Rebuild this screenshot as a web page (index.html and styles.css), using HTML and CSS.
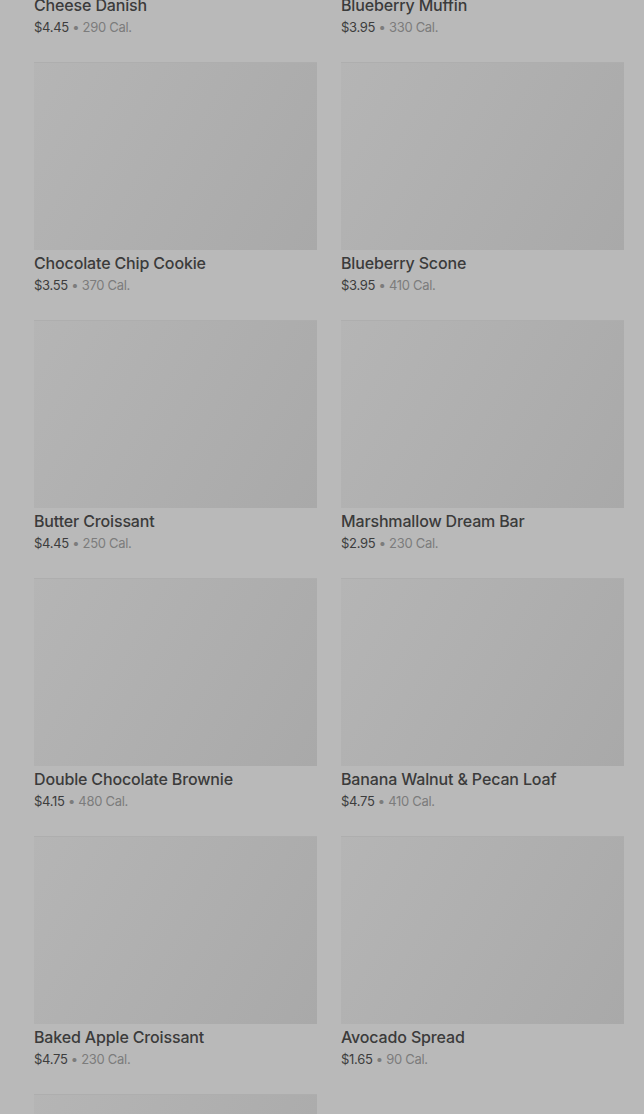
FILE: index.html
```html
<!DOCTYPE html>
<html lang="en">
<head>
  <meta charset="UTF-8" />
  <title>Bakery</title>
  <link rel="stylesheet" href="styles.css">
</head>
<body>

  <!-- Lista de itens (rolada) -->
  <div class="menu">
    <div class="grid">
      <div class="item">
        <div class="foto"></div>
        <h3>Cheese Danish</h3>
        <p class="info"><span class="preco">$4.45</span> • 290 Cal.</p>
      </div>
      <div class="item">
        <div class="foto"></div>
        <h3>Blueberry Muffin</h3>
        <p class="info"><span class="preco">$3.95</span> • 330 Cal.</p>
      </div>
      <div class="item">
        <div class="foto"></div>
        <h3>Chocolate Chip Cookie</h3>
        <p class="info"><span class="preco">$3.55</span> • 370 Cal.</p>
      </div>
      <div class="item">
        <div class="foto"></div>
        <h3>Blueberry Scone</h3>
        <p class="info"><span class="preco">$3.95</span> • 410 Cal.</p>
      </div>
      <div class="item">
        <div class="foto"></div>
        <h3>Butter Croissant</h3>
        <p class="info"><span class="preco">$4.45</span> • 250 Cal.</p>
      </div>
      <div class="item">
        <div class="foto"></div>
        <h3>Marshmallow Dream Bar</h3>
        <p class="info"><span class="preco">$2.95</span> • 230 Cal.</p>
      </div>
      <div class="item">
        <div class="foto"></div>
        <h3>Double Chocolate Brownie</h3>
        <p class="info"><span class="preco">$4.15</span> • 480 Cal.</p>
      </div>
      <div class="item">
        <div class="foto"></div>
        <h3>Banana Walnut &amp; Pecan Loaf</h3>
        <p class="info"><span class="preco">$4.75</span> • 410 Cal.</p>
      </div>
      <div class="item">
        <div class="foto"></div>
        <h3>Baked Apple Croissant</h3>
        <p class="info"><span class="preco">$4.75</span> • 230 Cal.</p>
      </div>
      <div class="item">
        <div class="foto"></div>
        <h3>Avocado Spread</h3>
        <p class="info"><span class="preco">$1.65</span> • 90 Cal.</p>
      </div>
      <div class="item">
        <div class="foto"></div>
      </div>
    </div>
  </div>

</body>
</html>
```

FILE: styles.css
```css
* {
  box-sizing: border-box;
  margin: 0;
  padding: 0;
  font-family: 'Inter', 'Roboto', sans-serif;
}

html, body {
  height: 100%;
  overflow: hidden;
}

body {
  background: #b9b9b9;
  color: #3c3c3c;
}

/* Lista rolada */
.menu {
  padding: 0 20px 0 34px;
}

.grid {
  display: grid;
  grid-template-columns: 283px 283px;
  column-gap: 24px;
  row-gap: 24px;
  margin-top: -196px;
}

.foto {
  height: 188px;
  background: linear-gradient(120deg, #b5b5b5 0%, #afafaf 50%, #a9a9a9 100%);
  box-shadow: inset 0 1px 0 #aeaeae;
}

.item h3 {
  margin-top: 2px;
  font-size: 16px;
  font-weight: 500;
  line-height: 22px;
  color: #3b3b3b;
  letter-spacing: -0.15px;
}

.info {
  font-size: 13px;
  line-height: 22px;
  letter-spacing: -0.3px;
  color: #7c7c7c;
}

.preco {
  color: #3d3d3d;
}
```
